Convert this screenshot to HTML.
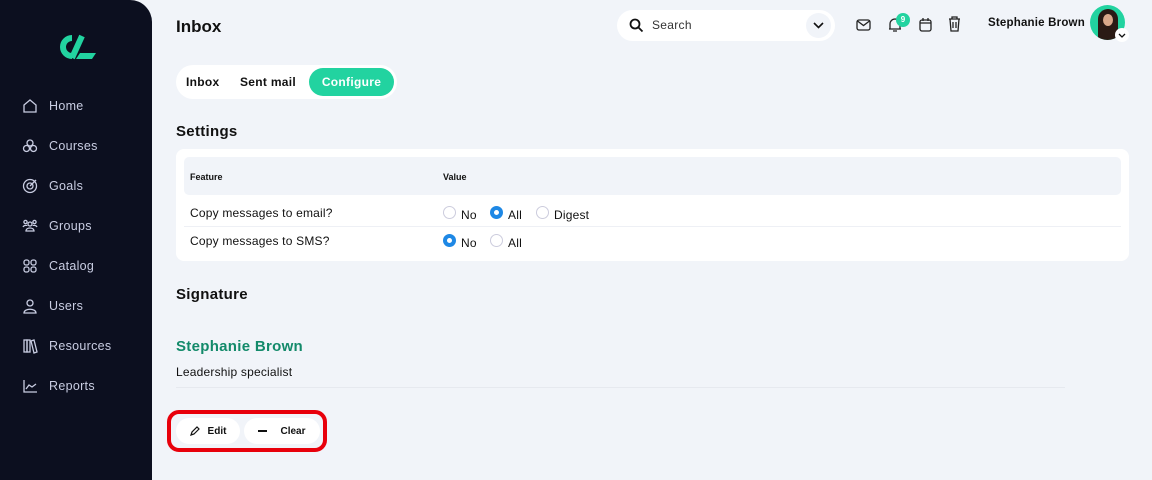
<!DOCTYPE html>
<html><head><meta charset="utf-8"><style>
*{margin:0;padding:0;box-sizing:border-box}
body{width:1152px;height:480px;overflow:hidden;background:#f1f4f9;font-family:"Liberation Sans",sans-serif;color:#111;position:relative}
.side{position:absolute;left:0;top:0;width:152px;height:480px;background:#0c0f1f;border-top-right-radius:22px}
.nav{position:absolute;left:22px;color:#c9cde2;font-size:12.5px;display:flex;align-items:center;letter-spacing:.3px}
.nav svg{width:16px;height:16px;margin-right:11px;stroke:#c9cde2;fill:none;stroke-width:1.3}
.a{position:absolute}
h1{position:absolute;left:176px;top:17px;font-size:17px;font-weight:bold}
.tabs{position:absolute;left:176px;top:65px;width:221px;height:34px;background:#fff;border-radius:17px}
.tabs span{position:absolute;top:10px;font-size:12px;font-weight:bold;letter-spacing:.3px}
.cfg{position:absolute;left:133px;top:3px;width:85px;height:28px;border-radius:14px;background:#22d3a0;color:#fff;font-size:12px;font-weight:bold;text-align:center;line-height:29px;letter-spacing:.3px}
h2{position:absolute;left:176px;font-size:15px;font-weight:bold;letter-spacing:.3px}
.card{position:absolute;left:176px;top:149px;width:953px;height:112px;background:#fff;border-radius:8px}
.th{position:absolute;left:8px;top:8px;width:937px;height:38px;background:#f1f4f9;border-radius:5px;font-size:9px;font-weight:bold}
.r{position:absolute;font-size:12px;letter-spacing:.2px}
.rad{position:absolute;width:13px;height:13px;border-radius:50%;border:1px solid #ccd;background:#fff}
.rad.on{border:4px solid #1e88e5}
.btn{position:absolute;top:418px;height:26px;background:#fff;border-radius:13px;font-size:10px;font-weight:bold;display:flex;align-items:center;justify-content:center}
</style></head><body>
<div class="side">
<svg class="a" style="left:56px;top:33px" width="40" height="28" viewBox="0 0 40 28"><path d="M16 5a9 9 0 1 0 0 18" stroke="#22d3a0" stroke-width="6" fill="none"/><path d="M26 3 L16 25" stroke="#22d3a0" stroke-width="6"/><path d="M24 20h16l-4 6H20z" fill="#22d3a0"/></svg>
<div class="nav" style="top:98px"><svg viewBox="0 0 16 16"><path d="M2 7l6-5 6 5v7H2z"/></svg>Home</div>
<div class="nav" style="top:138px"><svg viewBox="0 0 16 16"><circle cx="8" cy="5" r="3"/><circle cx="4.5" cy="10.5" r="3"/><circle cx="11.5" cy="10.5" r="3"/></svg>Courses</div>
<div class="nav" style="top:178px"><svg viewBox="0 0 16 16"><circle cx="8" cy="8" r="6.5"/><circle cx="8" cy="8" r="3"/><path d="M8 8l6-6"/></svg>Goals</div>
<div class="nav" style="top:218px"><svg viewBox="0 0 16 16"><circle cx="8" cy="6" r="2"/><circle cx="3.5" cy="4" r="1.6"/><circle cx="12.5" cy="4" r="1.6"/><path d="M4 13c0-4 8-4 8 0zM1 9c1-2 4-2 4-1M15 9c-1-2-4-2-4-1"/></svg>Groups</div>
<div class="nav" style="top:258px"><svg viewBox="0 0 16 16"><rect x="2" y="2" width="5" height="5" rx="2"/><rect x="9" y="2" width="5" height="5" rx="2"/><rect x="2" y="9" width="5" height="5" rx="2"/><rect x="9" y="9" width="5" height="5" rx="2"/></svg>Catalog</div>
<div class="nav" style="top:298px"><svg viewBox="0 0 16 16"><circle cx="8" cy="5" r="3"/><path d="M2 15c0-5 12-5 12 0z"/></svg>Users</div>
<div class="nav" style="top:338px"><svg viewBox="0 0 16 16"><rect x="2" y="2" width="3" height="12"/><rect x="5" y="2" width="3" height="12"/><path d="M9 3l3-1 3 12-3 1z"/></svg>Resources</div>
<div class="nav" style="top:378px"><svg viewBox="0 0 16 16"><path d="M2 2v12h13M4 11l3-4 3 2 4-3"/></svg>Reports</div>
</div>
<h1>Inbox</h1>
<div class="a" style="left:617px;top:10px;width:218px;height:31px;background:#fff;border-radius:16px">
<svg class="a" style="left:12px;top:8px" width="15" height="15" viewBox="0 0 15 15"><circle cx="6" cy="6" r="4.5" stroke="#111" stroke-width="1.8" fill="none"/><path d="M9.5 9.5l4 4" stroke="#111" stroke-width="1.8"/></svg>
<span class="a" style="left:35px;top:8px;font-size:12px;color:#333;letter-spacing:.3px">Search</span>
<div class="a" style="left:189px;top:3px;width:25px;height:25px;border-radius:50%;background:#f1f4f9"><svg class="a" style="left:7px;top:9px" width="11" height="7"><path d="M1 1l4.5 4.5L10 1" stroke="#111" stroke-width="1.6" fill="none"/></svg></div>
</div>
<svg class="a" style="left:856px;top:19px" width="15" height="12"><rect x="1" y="1" width="13" height="10" rx="2" stroke="#222" stroke-width="1.3" fill="none"/><path d="M1.5 2l6 4.5 6-4.5" stroke="#222" stroke-width="1.3" fill="none"/></svg>
<svg class="a" style="left:888px;top:17px" width="14" height="16"><path d="M2 12V7a5 5 0 0 1 10 0v5H1h12M5 14h4" stroke="#222" stroke-width="1.3" fill="none"/></svg>
<div class="a" style="left:896px;top:13px;width:14px;height:14px;border-radius:50%;background:#22d3a0;color:#fff;font-size:8px;font-weight:bold;text-align:center;line-height:14px">9</div>
<svg class="a" style="left:919px;top:17px" width="13" height="15"><rect x="1" y="3" width="11" height="11" rx="2" stroke="#222" stroke-width="1.3" fill="none"/><path d="M4 1v3M9 1v3M1 6h11" stroke="#222" stroke-width="1.3"/></svg>
<svg class="a" style="left:948px;top:16px" width="13" height="16"><path d="M1 3h11M4 3V1h5v2M2 3l1 12h7l1-12M5 6v6M8 6v6" stroke="#222" stroke-width="1.3" fill="none"/></svg>
<span class="a" style="left:988px;top:17px;font-size:11.5px;font-weight:bold;letter-spacing:.2px">Stephanie Brown</span>
<div class="a" style="left:1090px;top:5px;width:35px;height:35px;border-radius:50%;background:#22d3a0;overflow:hidden"><div class="a" style="left:8px;top:4px;width:20px;height:32px;border-radius:10px 10px 4px 4px;background:#2a1a14"></div><div class="a" style="left:13px;top:9px;width:10px;height:12px;border-radius:50%;background:#d9a88a"></div></div>
<div class="a" style="left:1115px;top:28px;width:14px;height:14px;border-radius:50%;background:#fff"><svg class="a" style="left:3px;top:5px" width="8" height="5"><path d="M1 1l3 3 3-3" stroke="#111" stroke-width="1.3" fill="none"/></svg></div>
<div class="tabs"><span style="left:10px">Inbox</span><span style="left:64px">Sent mail</span><div class="cfg">Configure</div></div>
<h2 style="top:123px">Settings</h2>
<div class="card">
<div class="th"><span class="a" style="left:6px;top:15px">Feature</span><span class="a" style="left:259px;top:15px">Value</span></div>
<span class="r" style="left:14px;top:57px">Copy messages to email?</span>
<div class="a" style="left:8px;top:77px;width:937px;height:1px;background:#eef0f5"></div>
<span class="r" style="left:14px;top:85px">Copy messages to SMS?</span>
<div class="rad" style="left:267px;top:57px"></div><span class="r" style="left:285px;top:59px">No</span>
<div class="rad on" style="left:314px;top:57px"></div><span class="r" style="left:332px;top:59px">All</span>
<div class="rad" style="left:360px;top:57px"></div><span class="r" style="left:378px;top:59px">Digest</span>
<div class="rad on" style="left:267px;top:85px"></div><span class="r" style="left:285px;top:87px">No</span>
<div class="rad" style="left:314px;top:85px"></div><span class="r" style="left:332px;top:87px">All</span>
</div>
<h2 style="top:286px">Signature</h2>
<span class="a" style="left:176px;top:338px;font-size:15px;font-weight:bold;color:#138a6a;letter-spacing:.3px">Stephanie Brown</span>
<span class="a" style="left:176px;top:365px;font-size:12px;letter-spacing:.2px">Leadership specialist</span>
<div class="a" style="left:176px;top:387px;width:889px;height:1px;background:#e6e9ef"></div>
<div class="a" style="left:167px;top:410px;width:160px;height:42px;border:4px solid #e8000b;border-radius:12px"></div>
<div class="btn" style="left:176px;width:64px"><svg width="10" height="10" style="margin-right:8px"><path d="M1 9l1-3 5-5 2 2-5 5z" stroke="#111" stroke-width="1.2" fill="none"/></svg>Edit</div>
<div class="btn" style="left:244px;width:76px"><span style="display:inline-block;width:9px;height:1.6px;background:#111;margin-right:13px"></span>Clear</div>
</body></html>
